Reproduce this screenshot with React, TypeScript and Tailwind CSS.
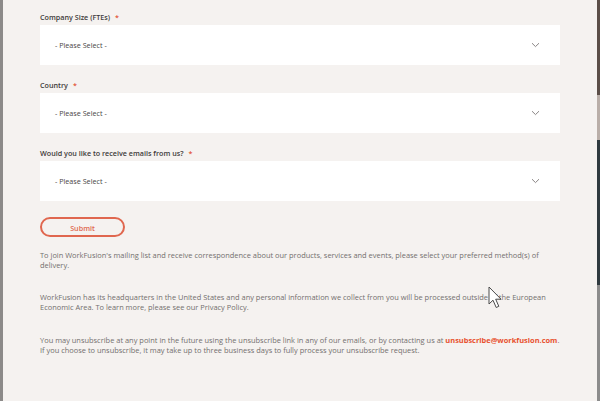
import React from 'react';

const fields = [
  { label: 'Company Size (FTEs)' },
  { label: 'Country' },
  { label: 'Would you like to receive emails from us?' },
];

function Chevron() {
  return (
    <svg width="9" height="6" viewBox="0 0 9 6" fill="none">
      <path d="M1 1.2 L4.5 4.6 L8 1.2" stroke="#8a8585" strokeWidth="1" />
    </svg>
  );
}

function Cursor() {
  return (
    <svg width="15" height="24" viewBox="0 0 15 24" className="absolute left-[488px] top-[286px]">
      <path
        d="M1 1 L1 18 L5 14.2 L8.2 21.5 L10.8 20.3 L7.7 13.2 L13 13.2 Z"
        fill="#ffffff"
        stroke="#4a4a4a"
        strokeWidth="1"
        strokeLinejoin="round"
      />
    </svg>
  );
}

export default function App() {
  return (
    <div className="relative flex w-[600px] h-[401px] overflow-hidden bg-[#f5f2f0] font-['Open_Sans',sans-serif]">
      {/* left window edge */}
      <div className="w-[3px] shrink-0 bg-[#8c8a89]" />

      <div className="flex-1 pl-[37px] pr-[37px] pt-[12px]">
        {fields.map((f, i) => (
          <div key={f.label} className={i > 0 ? 'mt-[15px]' : ''}>
            <div className="h-[10px] leading-[10px] text-[7.2px] font-semibold text-[#3d3a3a] mb-[3px]">
              {f.label}
              <span className="text-[#e2553b] ml-[5px]">*</span>
            </div>
            <div className="h-[40px] bg-white flex items-center justify-between pl-[15px] pr-[20px]">
              <span className="text-[7.2px] text-[#4a4646]">- Please Select -</span>
              <Chevron />
            </div>
          </div>
        ))}

        <button className="mt-[16px] w-[85px] h-[20px] rounded-full border-2 border-[#e0674f] flex items-center justify-center text-[7.2px] font-semibold text-[#e0674f] pt-[2px]">
          Submit
        </button>

        <div className="text-[7.45px] leading-[10px] text-[#736f6e] whitespace-nowrap">
          <p className="mt-[13px]">
            To join WorkFusion's mailing list and receive correspondence about our products, services and events, please select your preferred method(s) of
            <br />
            delivery.
          </p>
          <p className="mt-[22px]">
            WorkFusion has its headquarters in the United States and any personal information we collect from you will be processed outside of the European
            <br />
            Economic Area. To learn more, please see our Privacy Policy.
          </p>
          <p className="mt-[23px]">
            You may unsubscribe at any point in the future using the unsubscribe link in any of our emails, or by contacting us at{' '}
            <span className="font-bold text-[#e8512f]">unsubscribe@workfusion.com</span>.
            <br />
            If you choose to unsubscribe, it may take up to three business days to fully process your unsubscribe request.
          </p>
        </div>
      </div>

      {/* right window edge */}
      <div className="w-[3px] shrink-0 flex flex-col">
        <div className="h-[95px] bg-[#5b4e48]" />
        <div className="h-[45px] bg-[#b9aea8]" />
        <div className="h-[145px] bg-[#2f3a3f]" />
        <div className="flex-1 bg-[#8c8c8c]" />
      </div>

      <Cursor />
    </div>
  );
}
